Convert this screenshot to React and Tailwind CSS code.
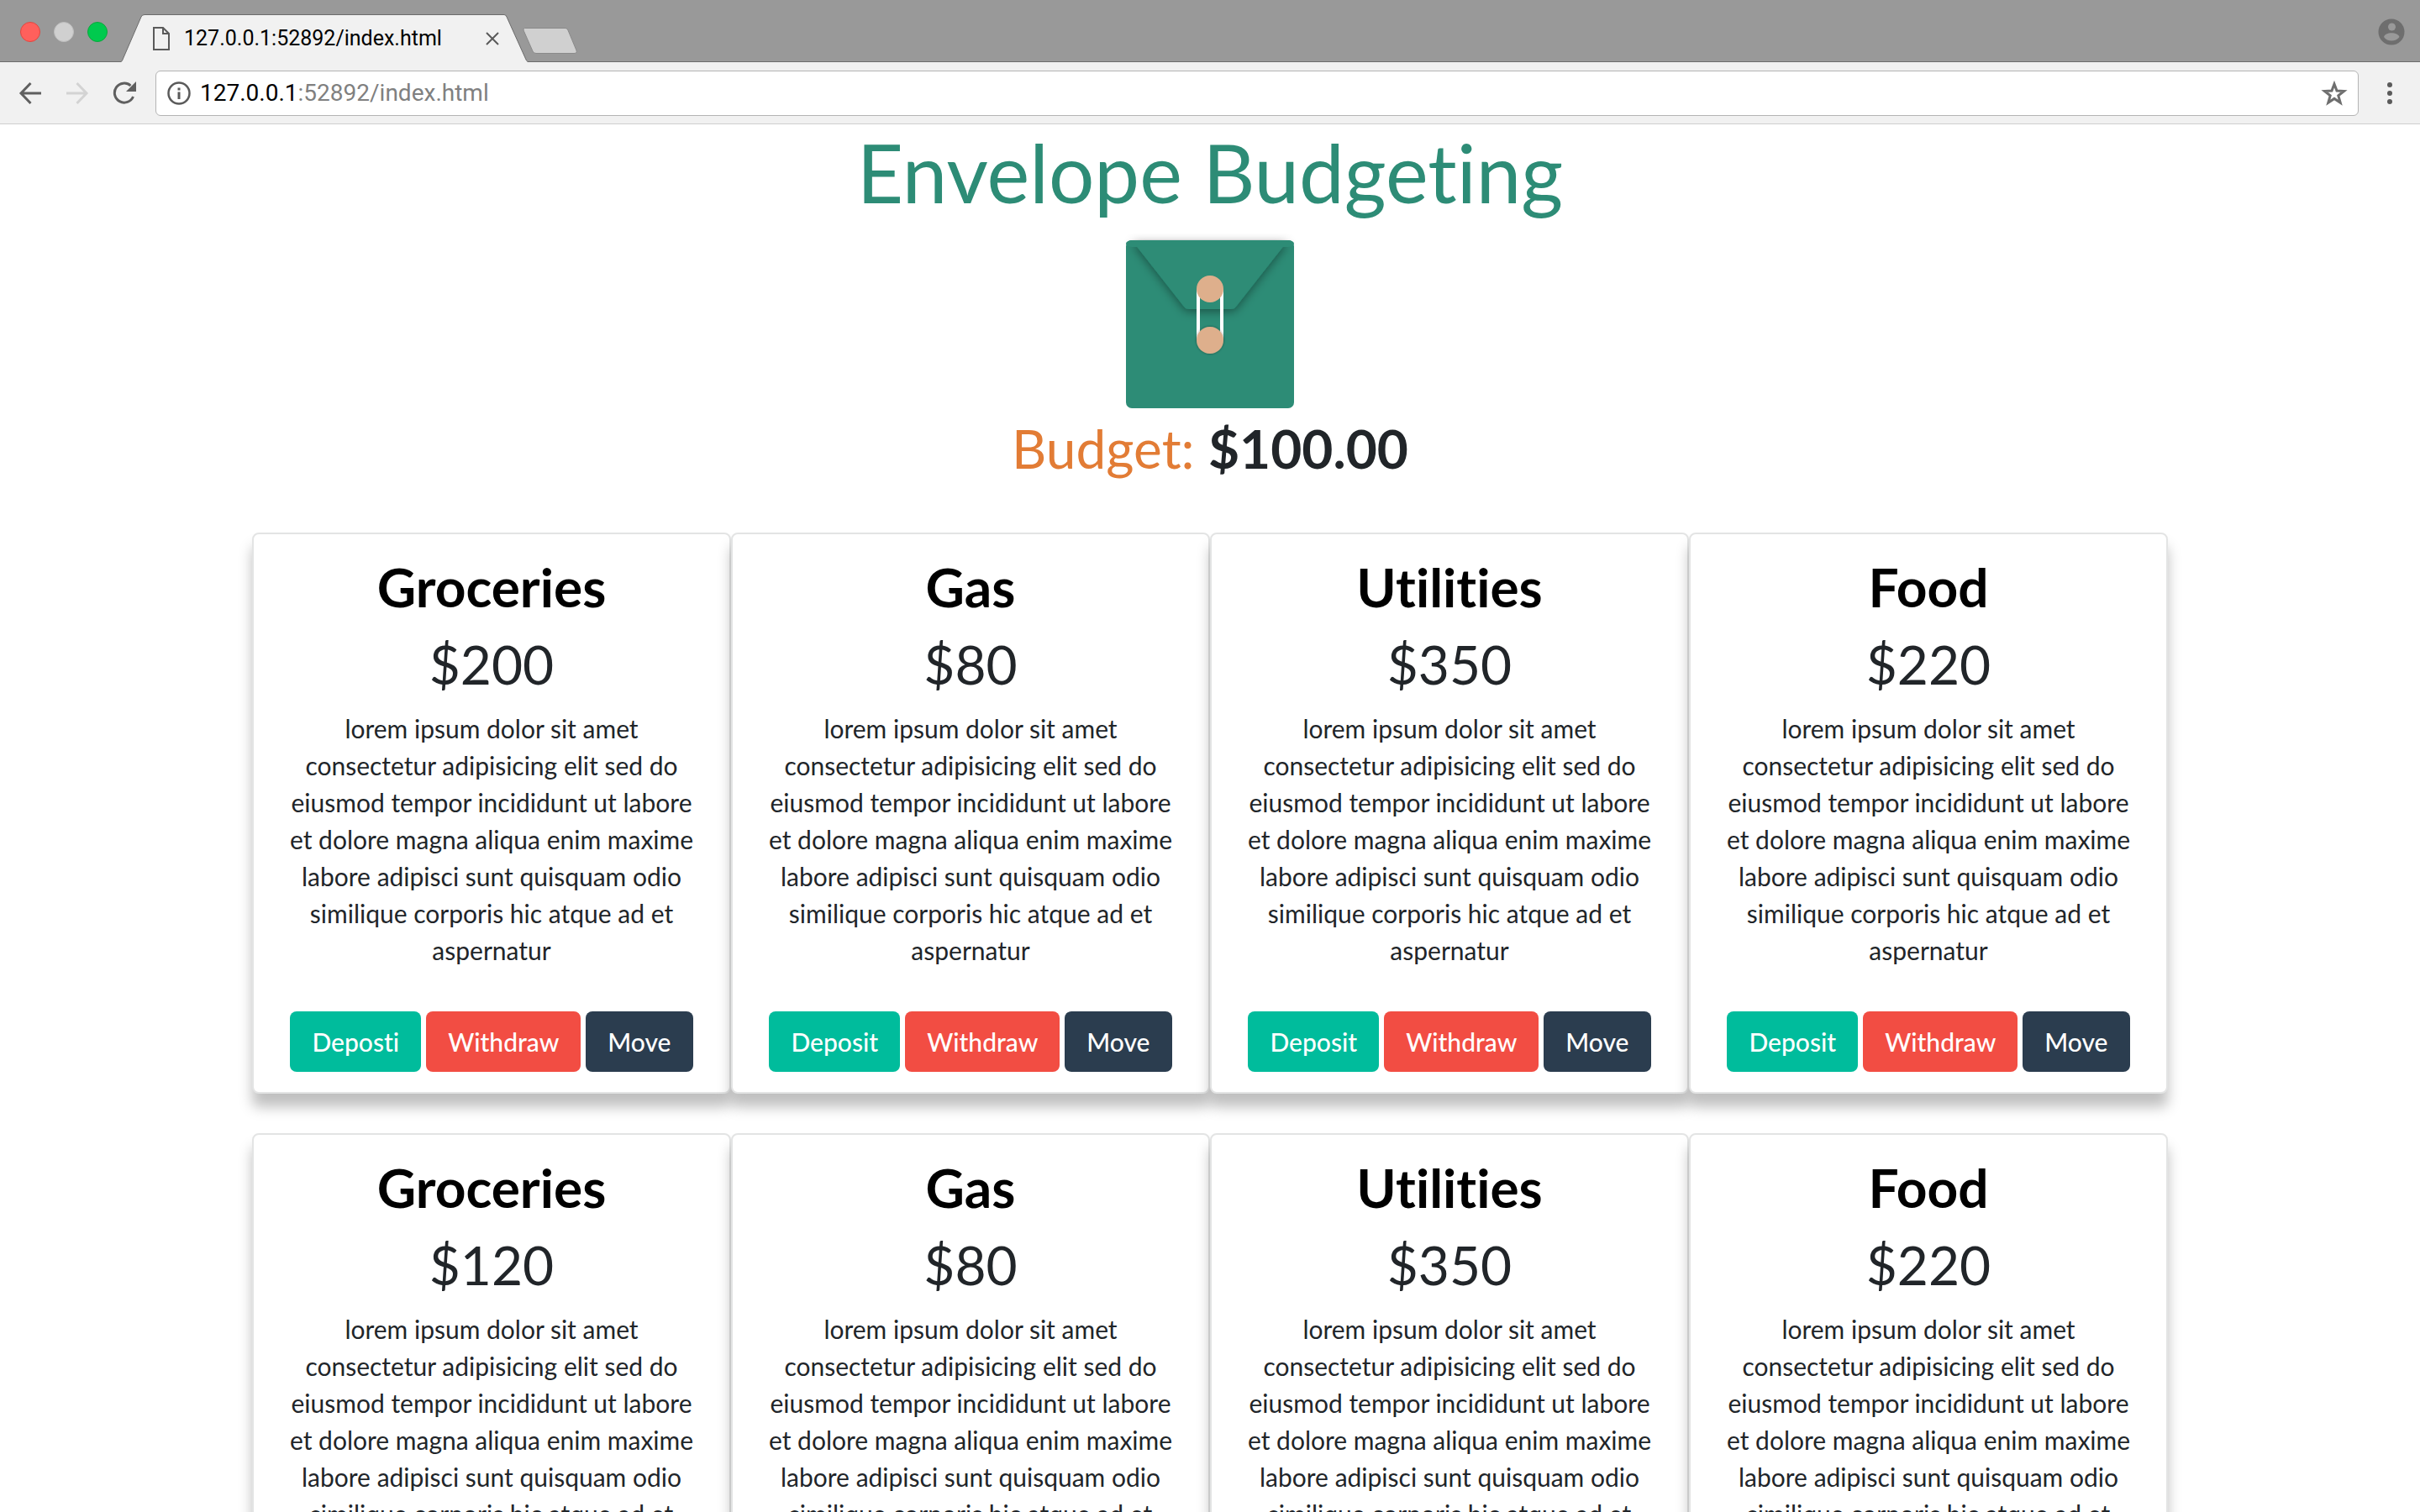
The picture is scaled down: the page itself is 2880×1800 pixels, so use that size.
import React from "react";

const BODY_TEXT =
  "lorem ipsum dolor sit amet consectetur adipisicing elit sed do eiusmod tempor incididunt ut labore et dolore magna aliqua enim maxime labore adipisci sunt quisquam odio similique corporis hic atque ad et aspernatur";

const ENVELOPES = [
  { name: "Groceries", amount: "$200", deposit: "Deposti" },
  { name: "Gas", amount: "$80", deposit: "Deposit" },
  { name: "Utilities", amount: "$350", deposit: "Deposit" },
  { name: "Food", amount: "$220", deposit: "Deposit" },
  { name: "Groceries", amount: "$120", deposit: "Deposit" },
  { name: "Gas", amount: "$80", deposit: "Deposit" },
  { name: "Utilities", amount: "$350", deposit: "Deposit" },
  { name: "Food", amount: "$220", deposit: "Deposit" },
];

function TabStrip() {
  return (
    <div className="flex h-[74px] items-end bg-[#999999] shadow-[inset_0_-1px_0_#6b6b6b]">
      <div className="flex h-[74px] w-[144px] shrink-0 items-center gap-4 pt-[2px] pl-6">
        <button type="button" aria-label="Close window" className="size-6 rounded-full border border-[#e2463f] bg-[#ff605c]" />
        <button type="button" aria-label="Minimize window" className="size-6 rounded-full border border-[#bdbdbd] bg-[#d0d0d0]" />
        <button type="button" aria-label="Zoom window" className="size-6 rounded-full border border-[#0aa83c] bg-[#00ca4e]" />
      </div>
      <div className="relative h-[57px] w-[484px] shrink-0">
        <svg className="absolute inset-0" width="484" height="57" viewBox="0 0 484 57" aria-hidden="true">
          <path d="M0 57 L1 56 L24 3 Q25 0.5 28 0.5 H456 Q458 0.5 459 3 L482 54 Q483 56 484 56 V57 Z" fill="#f1f1f1" />
          <path d="M0 56.5 L1.500 55 L24 3 Q25 0.5 28 0.5 H456 Q458 0.5 459 3 L482 54 Q483 56 484 56.5" fill="none" stroke="#6b6b6b" />
        </svg>
        <div className="relative flex h-full items-center pr-[34px] pl-[38px]">
          <svg width="20" height="28" viewBox="0 0 20 28" fill="none" stroke="#5a5a5a" strokeWidth="2" aria-hidden="true">
            <path d="M1 1H12L19 8V27H1Z M12 1V8H19" />
          </svg>
          <span className="ml-[17px] flex-1 font-['Roboto',sans-serif] text-[25px] whitespace-nowrap text-black">
            127.0.0.1:52892/index.html
          </span>
          <button type="button" aria-label="Close tab">
            <svg width="16" height="16" viewBox="0 0 16 16" stroke="#5a5a5a" strokeWidth="2" aria-hidden="true">
              <path d="M1 1 15 15M15 1 1 15" />
            </svg>
          </button>
        </div>
      </div>
      <button type="button" aria-label="New tab" className="-ml-[7px] self-start pt-[33px]">
        <svg width="66" height="32" viewBox="0 0 66 32" aria-hidden="true">
          <path d="M3.500 0.500H52Q54 0.500 55 3L65 27Q66 30.500 62 30.500H17Q14 30.500 13 28L2 3Q1.500 0.500 3.500 0.500Z" fill="#d0d0d0" stroke="#8a8a8a" />
        </svg>
      </button>
      <button type="button" aria-label="Profile" className="mr-[18px] mb-5 ml-auto">
        <svg width="32" height="32" viewBox="0 0 32 32" aria-hidden="true">
          <circle cx="16" cy="16" r="15.500" fill="#6e6e6e" />
          <circle cx="16.500" cy="10" r="4.500" fill="#999999" />
          <path d="M7 22C8 15.500 24 15.500 25.500 22C21 28 11 28 7 22Z" fill="#999999" />
        </svg>
      </button>
    </div>
  );
}

function Toolbar() {
  return (
    <div className="flex h-[74px] items-center border-b border-[#cfcfcf] bg-[#f1f1f1] pl-[22px]">
      <button type="button" aria-label="Back">
        <svg width="28" height="28" viewBox="0 0 28 28" fill="none" stroke="#5f5f5f" strokeWidth="3" aria-hidden="true">
          <path d="M27 14H3M14.500 2 3 14 14.500 26" />
        </svg>
      </button>
      <button type="button" aria-label="Forward" className="ml-7" disabled>
        <svg width="28" height="28" viewBox="0 0 28 28" fill="none" stroke="#d3d3d3" strokeWidth="3" aria-hidden="true">
          <path d="M1 14H25M13.500 2 25 14 13.500 26" />
        </svg>
      </button>
      <button type="button" aria-label="Reload" className="ml-7">
        <svg width="28" height="28" viewBox="0 0 28 28" fill="none" stroke="#5f5f5f" strokeWidth="3" aria-hidden="true">
          <path d="M21.500 5A11.500 11.500 0 1 0 24.500 18" />
          <path d="M28 0V12H16Z" fill="#5f5f5f" stroke="none" />
        </svg>
      </button>
      <div className="ml-[23px] flex h-[54px] flex-1 items-center rounded-md border border-[#b4b4b4] bg-white pr-3 pl-[13px]">
        <svg width="28" height="28" viewBox="0 0 28 28" fill="none" stroke="#5a5a5a" aria-hidden="true">
          <circle cx="14" cy="14" r="12.500" strokeWidth="2.500" />
          <path d="M14 12.500V21M14 7.500V10.500" strokeWidth="3" />
        </svg>
        <a href="#top" className="ml-[11px] flex-1 font-['Roboto',sans-serif] text-[28px] text-[#808080]">
          <span className="text-black">127.0.0.1</span>:52892/index.html
        </a>
        <button type="button" aria-label="Bookmark">
          <svg width="32" height="32" viewBox="0 0 32 32" fill="none" stroke="#6e6e6e" strokeWidth="3" aria-hidden="true">
            <path d="M16 5 19 13.100 27.500 13.500 20.800 18.800 23.200 27.200 16 22.400 8.800 27.200 11.200 18.800 4.500 13.500 13 13.100Z" />
          </svg>
        </button>
      </div>
      <button type="button" aria-label="Menu" className="mr-[33px] ml-[34px]">
        <svg width="6" height="28" viewBox="0 0 6 28" fill="#5a5a5a" aria-hidden="true">
          <circle cx="3" cy="4" r="3" />
          <circle cx="3" cy="14" r="3" />
          <circle cx="3" cy="24" r="3" />
        </svg>
      </button>
    </div>
  );
}

function EnvelopeLogo() {
  return (
    <svg width="216" height="216" viewBox="-8 -8 216 216" role="img" aria-label="Envelope" className="-my-2">
      <defs>
        <filter id="flap-shadow" x="-20%" y="-20%" width="140%" height="150%">
          <feDropShadow dx="0" dy="3" stdDeviation="6" floodColor="#000" floodOpacity="0.4" />
        </filter>
        <filter id="button-shadow" x="-30%" y="-30%" width="160%" height="160%">
          <feDropShadow dx="0" dy="0" stdDeviation="1.500" floodColor="#000" floodOpacity="0.45" />
        </filter>
      </defs>
      <path d="M8 0H192L190 2H10Z" filter="url(#flap-shadow)" />
      <rect width="200" height="200" rx="7" fill="#2d8c76" />
      <path d="M7 0H193L131 79Q129 82 125 82H75Q71 82 69 79Z" fill="#2d8c76" filter="url(#flap-shadow)" />
      <rect width="200" height="8" rx="7" fill="#2d8c76" />
      <path d="M86 58V118M114 58V118" stroke="#fff" strokeWidth="4" />
      <circle cx="100" cy="58" r="16" fill="#deaf8c" />
      <circle cx="100" cy="119" r="16" fill="#deaf8c" filter="url(#button-shadow)" />
    </svg>
  );
}

function EnvelopeCard({ name, amount, deposit }) {
  return (
    <article className="rounded-lg border-2 border-[#e3e4e4] bg-white px-10 pt-[25px] pb-6 text-center shadow-[0_16px_16px_rgba(0,0,0,0.25)]">
      <h2 className="text-[64px] leading-[76px] font-bold text-black">{name}</h2>
      <p className="mt-4 text-[64px] leading-[76px]">{amount}</p>
      <p className="mt-4">{BODY_TEXT}</p>
      <div className="mt-[51px] flex justify-center gap-[6px] font-medium text-white">
        <button type="button" className="h-[72px] rounded-lg bg-[#00bc9c] px-[26px]">{deposit}</button>
        <button type="button" className="h-[72px] rounded-lg bg-[#f24d43] px-[26px]">Withdraw</button>
        <button type="button" className="h-[72px] rounded-lg bg-[#2b3d4f] px-[26px]">Move</button>
      </div>
    </article>
  );
}

export default function App() {
  return (
    <div id="top" className="h-screen overflow-hidden bg-white font-['Lato',sans-serif] text-[30px] leading-[44px] text-[#212529] [font-variant-ligatures:none]">
      <header>
        <TabStrip />
        <Toolbar />
      </header>
      <main className="mx-auto max-w-[2280px]">
        <div className="flex flex-col items-center">
          <h1 className="text-[96px] leading-[114px] text-[#2d8c76]">Envelope Budgeting</h1>
          <div className="mt-6">
            <EnvelopeLogo />
          </div>
          <p className="mt-[10px] text-[64px] leading-[76px]">
            <span className="text-[#e27c35]">Budget:</span> <strong className="font-bold">$100.00</strong>
          </p>
        </div>
        <div className="mt-[62px] grid grid-cols-4 gap-y-[47px]">
          {ENVELOPES.map((envelope, index) => (
            <EnvelopeCard key={index} {...envelope} />
          ))}
        </div>
      </main>
    </div>
  );
}
